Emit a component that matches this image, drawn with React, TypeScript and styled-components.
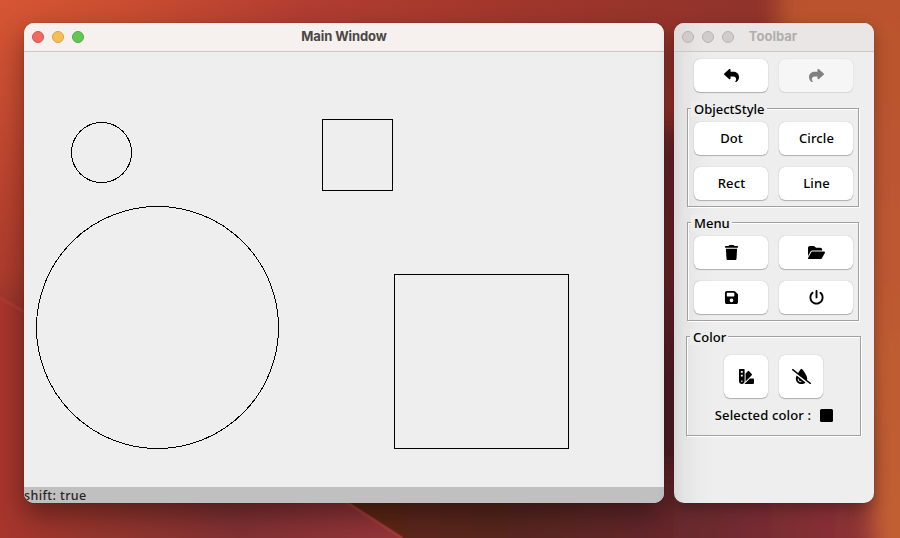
import React from "react";
import styled, { createGlobalStyle } from "styled-components";
import {
  FaReply,
  FaShare,
  FaTrash,
  FaFolderOpen,
  FaFloppyDisk,
  FaPowerOff,
  FaSwatchbook,
  FaDropletSlash,
} from "react-icons/fa6";

const GlobalStyle = createGlobalStyle`
  * { box-sizing: border-box; }
  body { margin: 0; overflow: hidden; }
`;

const Desktop = styled.main`
  position: relative;
  width: 900px;
  height: 538px;
  padding: 23px 24px;
  display: flex;
  gap: 10px;
  align-items: flex-start;
  overflow: hidden;
  isolation: isolate;
  background: #96332b;
`;

const WallpaperSvg = styled.svg`
  position: absolute;
  inset: 0;
  z-index: -1;
`;

const Window = styled.section<{ $width: number }>`
  width: ${(p) => p.$width}px;
  height: 480px;
  flex: none;
  display: flex;
  flex-direction: column;
  border-radius: 10px;
  overflow: hidden;
  background: #eeeeee;
  box-shadow: 0 0 1px rgba(0, 0, 0, 0.5), 0 12px 26px rgba(0, 0, 0, 0.38);
`;

const PaletteWindow = styled(Window)`
  background: linear-gradient(90deg, #d9d9d9 0, #e4e4e4 10px, #ebebeb 25px, #eeeeee 40px);
  box-shadow: 0 0 1px rgba(0, 0, 0, 0.4), 0 6px 16px rgba(0, 0, 0, 0.3);
`;

const TitleBar = styled.header<{ $active?: boolean }>`
  flex: none;
  height: 29px;
  padding: 0 8px 1px;
  display: grid;
  grid-template-columns: 52px 1fr 52px;
  align-items: center;
  background: ${(p) => (p.$active ? "#f6f0ee" : "linear-gradient(90deg, #dfdbda, #eae6e5 30px)")};
  border-bottom: 1px solid ${(p) => (p.$active ? "#c9c6c7" : "#c9c7c7")};
`;

const Lights = styled.div`
  display: flex;
  gap: 8px;
`;

const Light = styled.span<{ $fill: string; $edge: string }>`
  width: 12px;
  height: 12px;
  border-radius: 50%;
  background: ${(p) => p.$fill};
  border: 1px solid ${(p) => p.$edge};
`;

const Title = styled.h1<{ $active?: boolean }>`
  margin: 0 ${(p) => (p.$active ? 0 : 2)}px 0 0;
  padding-bottom: 1px;
  text-align: center;
  font: 700 13px/15px Inter, sans-serif;
  letter-spacing: ${(p) => (p.$active ? -0.1 : 0)}px;
  color: ${(p) => (p.$active ? "#4a4746" : "#b1aead")};
`;

const Canvas = styled.svg`
  flex: none;
  display: block;
  shape-rendering: crispEdges;
`;

const StatusBar = styled.footer`
  flex: 1;
  background: #c0c0c0;
  color: #262626;
  font: 500 12.5px/18px "Noto Sans", sans-serif;
  letter-spacing: 0.4px;
`;

const Tools = styled.div`
  padding: 7px 13px 0;
`;

const ButtonGrid = styled.div`
  display: grid;
  grid-template-columns: 74px 74px;
  gap: 12px 11px;
`;

const History = styled(ButtonGrid)`
  padding-left: 7px;
  margin-bottom: 16px;
`;

const Button = styled.button<{ $square?: boolean }>`
  width: ${(p) => (p.$square ? 44 : 74)}px;
  height: ${(p) => (p.$square ? 43 : 33)}px;
  padding: 0;
  display: flex;
  align-items: center;
  justify-content: center;
  border: 0;
  border-radius: 6px;
  background: #ffffff;
  color: #000;
  font: 500 13px/16px "Noto Sans", sans-serif;
  letter-spacing: 0.1px;
  box-shadow: 0 0 1px rgba(0, 0, 0, 0.3), 0 1px 1px rgba(0, 0, 0, 0.24);
  &:disabled {
    background: #f6f6f6;
    color: #808080;
    box-shadow: 0 0 1px rgba(0, 0, 0, 0.2), 0 1px 1px rgba(0, 0, 0, 0.08);
  }
  svg {
    flex: none;
    margin-right: -1px;
  }
`;

const TextButton = styled(Button)`
  padding: 0 0 2px 1px;
`;

const Group = styled.section<{ $wide?: boolean }>`
  width: ${(p) => (p.$wide ? 175 : 172)}px;
  height: ${(p) => (p.$wide ? 100 : 99)}px;
  margin: 0 0 15px ${(p) => (p.$wide ? -1 : 0)}px;
  padding: 0 6px;
  border: 1px solid #a0a0a0;
  box-shadow: 1px 1px 0 #fff, inset 1px 1px 0 #fff;
`;

const GroupTitle = styled.h2`
  width: fit-content;
  height: 16px;
  margin: -8px 0 5px -3px;
  padding: 0 2px 0 3px;
  background: #ededed;
  font: 500 13px/16px "Noto Sans", sans-serif;
  color: #000;
`;

const ColorButtons = styled.div`
  display: flex;
  justify-content: center;
  gap: 11px;
  padding-top: 5px;
`;

const Selection = styled.div`
  display: flex;
  align-items: center;
  justify-content: center;
  gap: 9px;
  height: 16px;
  margin-top: 9px;
  padding-left: 1px;
  font: 500 13px/16px "Noto Sans", sans-serif;
  letter-spacing: 0.15px;
`;

const Swatch = styled.span`
  width: 13px;
  height: 13px;
  border-radius: 1.5px;
  background: #000;
`;

function Wallpaper() {
  return (
    <WallpaperSvg width="900" height="538" viewBox="0 0 900 538" aria-hidden="true">
      <defs>
        <linearGradient id="sky" x1="0" y1="0" x2="1" y2="0">
          <stop offset="0" stopColor="#d65633" />
          <stop offset="0.14" stopColor="#c94d31" />
          <stop offset="0.34" stopColor="#b13d31" />
          <stop offset="0.58" stopColor="#a0362b" />
          <stop offset="0.82" stopColor="#90332b" />
        </linearGradient>
        <linearGradient id="fall" x1="0" y1="0" x2="0" y2="1">
          <stop offset="0" stopColor="#a2322b" stopOpacity="0" />
          <stop offset="0.5" stopColor="#a4352b" stopOpacity="0.8" />
          <stop offset="0.7" stopColor="#702a28" />
          <stop offset="1" stopColor="#652823" />
        </linearGradient>
        <linearGradient id="floor" x1="0" y1="0" x2="1" y2="0">
          <stop offset="0.1" stopColor="#5d2517" />
          <stop offset="0.34" stopColor="#582520" />
          <stop offset="0.62" stopColor="#69292e" />
          <stop offset="0.92" stopColor="#933237" />
        </linearGradient>
        <linearGradient id="ridge" gradientUnits="userSpaceOnUse" x1="0" y1="0" x2="400" y2="0">
          <stop offset="0" stopColor="#a7352c" />
          <stop offset="0.25" stopColor="#94352c" />
          <stop offset="0.6" stopColor="#813033" />
          <stop offset="1" stopColor="#953438" />
        </linearGradient>
        <linearGradient id="amber" x1="0" y1="0" x2="0" y2="1">
          <stop offset="0" stopColor="#b9522e" />
          <stop offset="1" stopColor="#c26034" />
        </linearGradient>
        <filter id="soft" x="-50%" y="-20%" width="200%" height="140%">
          <feGaussianBlur stdDeviation="11" />
        </filter>
        <filter id="glow">
          <feGaussianBlur stdDeviation="1.2" />
        </filter>
      </defs>
      <rect width="900" height="538" fill="url(#sky)" />
      <rect width="900" height="538" fill="url(#fall)" />
      <rect x="620" y="130" width="100" height="340" fill="#40192c" opacity="0.5" filter="url(#soft)" />
      <rect x="300" y="470" width="640" height="120" fill="url(#floor)" filter="url(#soft)" />
      <path d="M778-40H940V580H876C869 470 852 240 778 40Z" fill="url(#amber)" filter="url(#soft)" />
      <path d="M0 297Q175 394 350 503L404 538H0Z" fill="url(#ridge)" />
      <path d="M0 298Q175 395 349 504L402 538" fill="none" stroke="#c2433d" strokeWidth="1.5" opacity="0.75" filter="url(#glow)" />
    </WallpaperSvg>
  );
}

function WindowTitle({ title, active }: { title: string; active?: boolean }) {
  const lights = active
    ? [["#ee6b60", "#d6554c"], ["#f5bf58", "#d9a144"], ["#63c757", "#50ab43"]]
    : [["#d0cccb", "#b8b4b3"], ["#d0cccb", "#b8b4b3"], ["#d0cccb", "#b8b4b3"]];
  return (
    <TitleBar $active={active}>
      <Lights>
        {lights.map(([fill, edge], i) => (
          <Light key={i} $fill={fill} $edge={edge} />
        ))}
      </Lights>
      <Title $active={active}>{title}</Title>
    </TitleBar>
  );
}

export default function App() {
  return (
    <>
      <GlobalStyle />
      <Desktop>
        <Wallpaper />
        <Window $width={640}>
          <WindowTitle title="Main Window" active />
          <Canvas width="640" height="435" viewBox="0 0 640 435" fill="none" stroke="#000" strokeWidth="1">
            <circle cx="77.5" cy="100.5" r="30" />
            <circle cx="133.5" cy="275.5" r="121" />
            <rect x="298.5" y="67.5" width="70" height="71" />
            <rect x="370.5" y="222.5" width="174" height="174" />
          </Canvas>
          <StatusBar>shift: true</StatusBar>
        </Window>
        <PaletteWindow $width={200}>
          <WindowTitle title="Toolbar" />
          <Tools>
            <History>
              <Button aria-label="Undo"><FaReply size={15} /></Button>
              <Button aria-label="Redo" disabled><FaShare size={15} /></Button>
            </History>
            <Group>
              <GroupTitle>ObjectStyle</GroupTitle>
              <ButtonGrid>
                <TextButton>Dot</TextButton>
                <TextButton>Circle</TextButton>
                <TextButton>Rect</TextButton>
                <TextButton>Line</TextButton>
              </ButtonGrid>
            </Group>
            <Group>
              <GroupTitle>Menu</GroupTitle>
              <ButtonGrid>
                <Button aria-label="Delete"><FaTrash size={15} /></Button>
                <Button aria-label="Open"><FaFolderOpen size={17} /></Button>
                <Button aria-label="Save"><FaFloppyDisk size={15} /></Button>
                <Button aria-label="Quit"><FaPowerOff size={15} /></Button>
              </ButtonGrid>
            </Group>
            <Group $wide>
              <GroupTitle>Color</GroupTitle>
              <ColorButtons>
                <Button $square aria-label="Pick color"><FaSwatchbook size={15} /></Button>
                <Button $square aria-label="No color"><FaDropletSlash size={19} /></Button>
              </ColorButtons>
              <Selection>
                <span>Selected color :</span>
                <Swatch />
              </Selection>
            </Group>
          </Tools>
        </PaletteWindow>
      </Desktop>
    </>
  );
}
